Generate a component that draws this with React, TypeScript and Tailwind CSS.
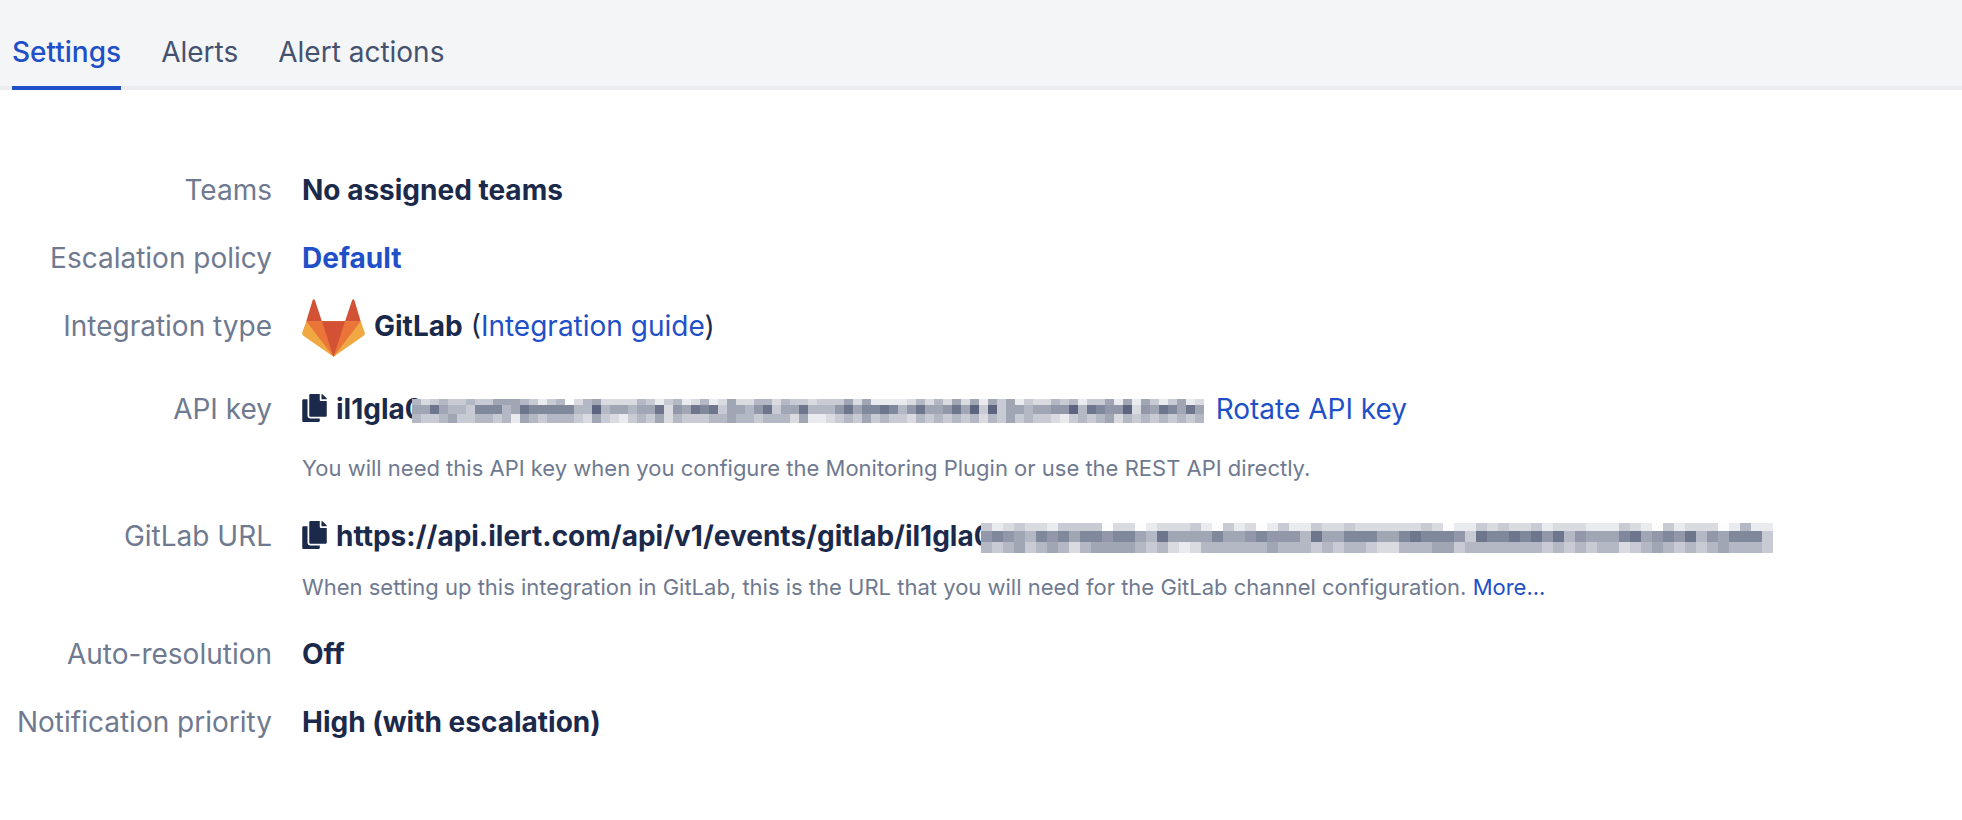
import type { ReactNode } from "react";
import { FaCopy } from "react-icons/fa";

const SHADES = ["#fdfdfe", "#e9ebee", "#d9dbe1", "#c8cbd4", "#b4b8c4", "#a1a6b5", "#9298a9", "#80889b", "#6d768d", "#5c6480"];

type Band = { height: number; shades: string };

const KEY_MASK: Band[] = [
  { height: 6, shades: "4234334335554313402452222431341241252244243323335251111242425251535132243413351515313512" },
  { height: 9, shades: "5585443777458777774494554558265878355468355844468577874685568593935545566948766926587585" },
  { height: 9, shades: "4334533443415434443253213435243334454434442511234353433243434342435343321343452434343434" },
];

const URL_MASK: Band[] = [
  { height: 8, shades: "312322133330220122231031201311322322222232011323223122211132103122201411" },
  { height: 11, shades: "676547675776775485555755676664855777557877763877878684655578567684657773" },
  { height: 11, shades: "434534542455554342124444445444343443224445534444444343434423454343454443" },
];

function Mask({ bands, cell }: { bands: Band[]; cell: number }) {
  const columns = Math.max(...bands.map((b) => b.shades.length));
  const height = bands.reduce((sum, b) => sum + b.height, 0);
  let top = 0;
  return (
    <svg
      width={columns * cell}
      height={height}
      shapeRendering="crispEdges"
      className="relative -ml-3 mt-1 shrink-0"
      role="img"
      aria-label="Hidden"
    >
      {bands.map((band, row) => {
        const y = top;
        top += band.height;
        return band.shades.split("").map((shade, i) => (
          <rect key={`${row}-${i}`} x={i * cell} y={y} width={cell} height={band.height} fill={SHADES[Number(shade)]} />
        ));
      })}
    </svg>
  );
}

function GitLabLogo() {
  return (
    <svg viewBox="37 44 190 174" className="mt-1 h-[58px] w-[63px] shrink-0" aria-hidden="true">
      <path fill="#f0a843" d="M50 111 38 144Q36 150 41 154L132 218 223 154Q228 150 226 144L214 111Z" />
      <path fill="#eb7439" d="M50 111H214L132 218Z" />
      <path fill="#d35134" d="M97 111H167L132 218ZM50 111 69 47Q72 42 76 47L97 111ZM167 111 188 47Q192 42 195 47L214 111Z" />
    </svg>
  );
}

function Row({ label, children }: { label: string; children: ReactNode }) {
  return (
    <div className="flex h-17 items-center gap-[30px]">
      <dt className="w-[272px] shrink-0 text-right text-[#6f7a90]">{label}</dt>
      <dd className="flex min-w-0 items-center whitespace-nowrap font-bold text-[#1b294b]">{children}</dd>
    </div>
  );
}

function CopyButton({ label }: { label: string }) {
  return (
    <button type="button" aria-label={label} className="mr-[9px] w-[25px] shrink-0 pb-0.5">
      <FaCopy className="h-7 w-[25px]" />
    </button>
  );
}

function Hint({ children }: { children: ReactNode }) {
  return <p className="pl-[302px] text-[22px] leading-[34px] text-[#6f7a90]">{children}</p>;
}

export default function App() {
  return (
    <div className="min-h-screen bg-white font-['Inter',sans-serif] text-[28px] leading-10">
      <nav className="flex gap-10 border-b-4 border-[#ebecef] bg-[#f4f5f7] px-3 pt-8">
        <a href="#settings" aria-current="page" className="-mb-1 border-b-4 border-[#1f50c8] pb-[14px] font-medium text-[#1f50c8]">
          Settings
        </a>
        <a href="#alerts" className="text-[#44526f]">Alerts</a>
        <a href="#actions" className="text-[#44526f]">Alert actions</a>
      </nav>

      <main className="pt-[66px] pb-16">
        <dl>
          <Row label="Teams">No assigned teams</Row>
          <Row label="Escalation policy">
            <a href="#default" className="text-[#1f50c8]">Default</a>
          </Row>
          <Row label="Integration type">
            <GitLabLogo />
            <span className="ml-[9px]">GitLab</span>
            <span className="ml-2 font-normal">
              (<a href="#guide" className="text-[#1f50c8]">Integration guide</a>)
            </span>
          </Row>
        </dl>

        <dl className="mt-[15px]">
          <Row label="API key">
            <CopyButton label="Copy API key" />
            <span>il1gla0</span>
            <Mask bands={KEY_MASK} cell={9} />
            <button type="button" className="ml-3 font-normal text-[#1f50c8]">Rotate API key</button>
          </Row>
        </dl>
        <div className="mt-2">
          <Hint>You will need this API key when you configure the Monitoring Plugin or use the REST API directly.</Hint>
        </div>

        <dl className="mt-[17px]">
          <Row label="GitLab URL">
            <CopyButton label="Copy GitLab URL" />
            <span>https://api.ilert.com/api/v1/events/gitlab/il1gla0</span>
            <Mask bands={URL_MASK} cell={11} />
          </Row>
        </dl>
        <Hint>
          When setting up this integration in GitLab, this is the URL that you will need for the GitLab channel
          configuration. <a href="#more" className="text-[#1f50c8]">More...</a>
        </Hint>

        <dl className="mt-4">
          <Row label="Auto-resolution">Off</Row>
          <Row label="Notification priority">High (with escalation)</Row>
        </dl>
      </main>
    </div>
  );
}
